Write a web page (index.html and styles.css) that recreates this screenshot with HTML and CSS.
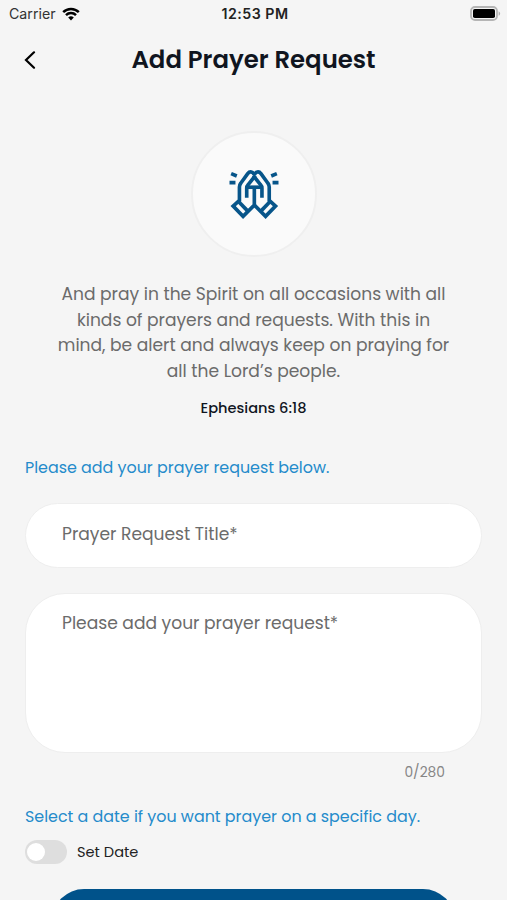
FILE: index.html
```html
<!DOCTYPE html>
<html lang="en">
<head>
    <meta charset="UTF-8">
    <meta name="viewport" content="width=device-width, initial-scale=1.0">
    <title>Add Prayer Request</title>
    <link rel="stylesheet" href="styles.css">
</head>
<body>
    <div class="status-bar">
        <div class="carrier">
            <span class="carrier-name">Carrier</span>
            <svg class="wifi" viewBox="0 0 18 14" width="18" height="14">
                <path d="M1.2 5.2a11 11 0 0 1 15.6 0" />
                <path d="M4 8.1a7.1 7.1 0 0 1 10 0" />
                <path class="wifi-dot" d="M9 13.4 6.2 10.6a4 4 0 0 1 5.6 0z" />
            </svg>
        </div>
        <span class="time">12:53 PM</span>
        <svg class="battery" viewBox="0 0 31 15" width="31" height="15">
            <rect x="1" y="1" width="26" height="13" rx="4" fill="#f4f4f4" stroke="#b5b5b5" stroke-width="1.8" />
            <rect x="3" y="3" width="22" height="9" rx="1.8" fill="#000" />
            <path d="M28.6 5.2v4.6a2.5 2.5 0 0 0 0-4.6z" fill="#b0b0b0" />
        </svg>
    </div>

    <header class="header">
        <button class="back-button" aria-label="Back">
            <svg viewBox="0 0 12 18" width="12" height="18">
                <path d="M10 1.3 2 9l8 7.7" />
            </svg>
        </button>
        <h1 class="title">Add Prayer Request</h1>
    </header>

    <main class="content">
        <div class="hands-circle">
            <svg class="hands" viewBox="135 136 150 148" width="50" height="49">
                <!-- left hand -->
                <path d="M211 151c-4-11-14-12-20-4l-21 29q-4 5-4 11v41l-19 17 30 31 34-34V188" />
                <path d="M161 229l31 32" />
                <path d="M214 153l-22 28q-4 4-4 10v29" />
                <!-- right hand -->
                <path d="M211 151c4-11 14-12 20-4l21 29q4 5 4 11v41l19 17-30 31-34-34" />
                <path d="M261 229l-31 32" />
                <path d="M208 153l22 28q4 4 4 10v29" />
                <path d="M190 188h42" />
                <!-- rays -->
                <path d="M141 147l17 7M136 174h18M279 147l-17 7M284 174h-18" />
            </svg>
        </div>

        <p class="verse">
            <span class="line">And pray in the Spirit on all occasions with all</span>
            <span class="line">kinds of prayers and requests. With this in</span>
            <span class="line">mind, be alert and always keep on praying for</span>
            <span class="line">all the Lord’s people.</span>
        </p>
        <p class="verse-ref">Ephesians 6:18</p>

        <form class="prayer-form">
            <p class="hint hint-request">Please add your prayer request below.</p>
            <input class="field title-field" type="text" placeholder="Prayer Request Title*">
            <textarea class="field request-field" maxlength="280" placeholder="Please add your prayer request*"></textarea>
            <div class="counter">0/280</div>

            <p class="hint hint-date">Select a date if you want prayer on a specific day.</p>
            <label class="date-row">
                <span class="toggle"><span class="toggle-knob"></span></span>
                <span class="date-label">Set Date</span>
            </label>
            <button class="submit-button" type="button" aria-label="Submit"></button>
        </form>
    </main>
</body>
</html>
```

FILE: styles.css
```css
* {
    box-sizing: border-box;
}

body {
    margin: 0;
    height: 900px;
    overflow: hidden;
    background: #f5f5f5;
    color: #10151f;
    font-family: Poppins, Inter, sans-serif;
}

p, h1 {
    margin: 0;
}

.status-bar {
    display: grid;
    grid-template-columns: 1fr auto 1fr;
    align-items: center;
    height: 27px;
    padding: 0 6px 0 9px;
    font-family: Inter, sans-serif;
}

.carrier {
    display: flex;
    align-items: center;
    gap: 6px;
    font-size: 14.2px;
    color: #333;
}

.wifi {
    fill: none;
    stroke: #000;
    stroke-width: 2.5;
}

.wifi .wifi-dot {
    fill: #000;
    stroke: none;
}

.time {
    font-size: 14.2px;
    font-weight: 600;
    letter-spacing: 0.5px;
    color: #222;
}

.battery {
    justify-self: end;
}

.header {
    display: grid;
    grid-template-columns: 60px 1fr 60px;
    align-items: center;
    height: 65px;
}

.back-button {
    display: flex;
    padding: 0 0 0 24px;
    border: none;
    background: none;
}

.back-button path {
    fill: none;
    stroke: #000;
    stroke-width: 2.2;
    stroke-linecap: round;
}

.title {
    font-size: 24.4px;
    font-weight: 600;
    text-align: center;
    white-space: nowrap;
}

.content {
    padding: 39px 25px 0;
}

.hands-circle {
    display: flex;
    align-items: center;
    justify-content: center;
    width: 126px;
    height: 126px;
    margin: 0 auto;
    border: 2px solid #efefef;
    border-radius: 50%;
    background: #fafafa;
}

.hands {
    fill: none;
    stroke: #07558a;
    stroke-width: 11;
}

.verse {
    margin-top: 25px;
    font-size: 17.1px;
    line-height: 25.6px;
    text-align: center;
    color: #6b6b6b;
}

.line {
    display: block;
    white-space: nowrap;
}

.verse-ref {
    margin-top: 12.6px;
    font-size: 14.6px;
    font-weight: 500;
    line-height: 22px;
    text-align: center;
}

.prayer-form {
    display: flex;
    flex-direction: column;
}

.hint {
    font-size: 15.9px;
    line-height: 24px;
    color: #248bcb;
    white-space: nowrap;
}

.hint-request {
    margin-top: 37px;
}

.field {
    display: block;
    width: 457px;
    border: 1.5px solid #eee;
    background: #fff;
    font-family: inherit;
    font-size: 17.1px;
    line-height: 24px;
    outline: none;
    resize: none;
}

.field::placeholder {
    color: #6b6b6b;
    opacity: 1;
}

.title-field {
    height: 65px;
    margin-top: 23px;
    padding: 0 36px 3px;
    border-radius: 33px;
}

.request-field {
    height: 160px;
    margin-top: 25px;
    padding: 17px 36px;
    border-radius: 40px;
    overflow: hidden;
}

.counter {
    margin-top: 9px;
    padding-right: 37px;
    font-size: 13.8px;
    line-height: 22px;
    text-align: right;
    color: #858585;
}

.hint-date {
    margin-top: 21px;
}

.date-row {
    display: flex;
    align-items: center;
    gap: 10px;
    height: 24px;
    margin-top: 11px;
}

.toggle {
    width: 42px;
    height: 24px;
    padding: 3px 2px;
    border-radius: 12px;
    background: #dedede;
}

.toggle-knob {
    display: block;
    width: 18px;
    height: 18px;
    border-radius: 50%;
    background: #fff;
}

.date-label {
    padding-top: 2px;
    font-size: 14.6px;
    color: #222;
}

.submit-button {
    width: 403px;
    height: 64px;
    margin-top: 25px;
    align-self: center;
    border: none;
    border-radius: 32px;
    background: #00528a;
}
```
